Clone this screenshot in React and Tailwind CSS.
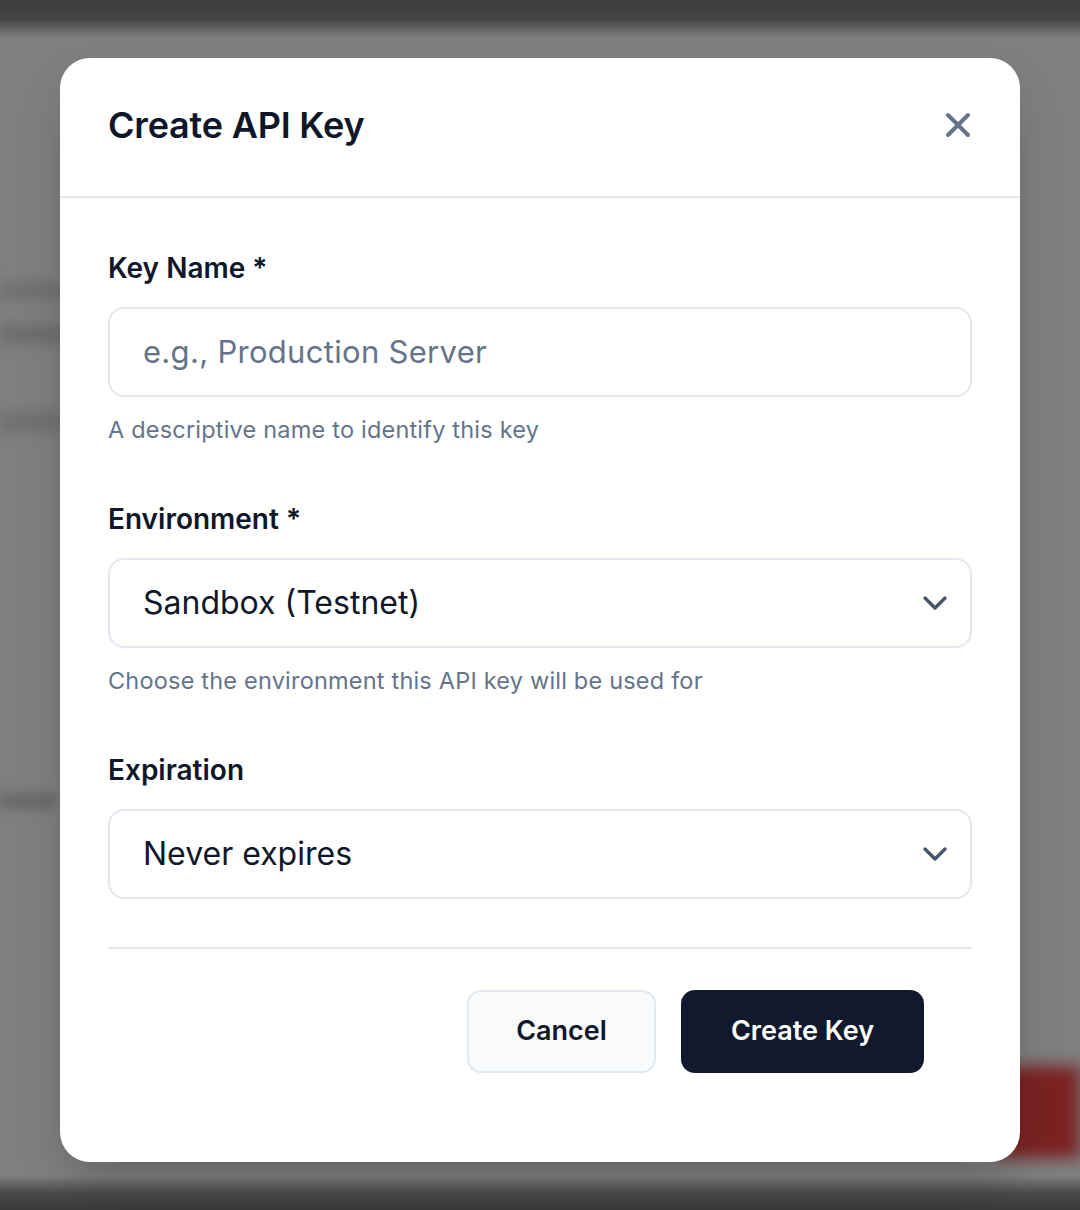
import { X, ChevronDown } from "lucide-react";

const font = { fontFamily: "Inter, 'Noto Sans', sans-serif" };

function Field({ label, helper, children, last }) {
  return (
    <div className={last ? "" : "mb-[59px]"}>
      <div className="text-[28px] leading-[32px] font-semibold text-[#0f172a] mb-[23px]">
        {label}
      </div>
      {children}
      {helper && (
        <div className="mt-[19px] text-[23.5px] leading-[28px] text-[#64748b] tracking-[0.2px]">
          {helper}
        </div>
      )}
    </div>
  );
}

function SelectBox({ value }) {
  return (
    <div className="h-[90px] rounded-[16px] border-2 border-[#e2e8f0] flex items-center justify-between pl-[33px] pr-[15px]">
      <span className="text-[32px] text-[#0f172a]">{value}</span>
      <ChevronDown size={40} strokeWidth={2} className="text-[#475569]" />
    </div>
  );
}

export default function App() {
  return (
    <div
      className="relative h-[1210px] w-[1080px] overflow-hidden bg-[#7f7f7f]"
      style={font}
    >
      {/* blurred page behind the overlay */}
      <div className="absolute inset-x-0 top-0 h-[38px] bg-gradient-to-b from-[#3d3d3d] via-[#454545] to-[#7f7f7f]" />
      <div className="absolute inset-x-0 bottom-0 h-[34px] bg-gradient-to-t from-[#3a3a3a] via-[#4a4a4a] to-[#7f7f7f]" />
      <div className="absolute left-0 top-[284px] h-[14px] w-[70px] bg-[#6c6c6c] blur-[7px]" />
      <div className="absolute left-0 top-[326px] h-[16px] w-[70px] bg-[#6a6a6a] blur-[7px]" />
      <div className="absolute left-0 top-[414px] h-[16px] w-[70px] bg-[#6d6d6d] blur-[7px]" />
      <div className="absolute left-0 top-[794px] h-[14px] w-[56px] bg-[#666666] blur-[6px]" />
      <div className="absolute right-0 top-[1066px] h-[92px] w-[84px] bg-[#7a2222] blur-[8px]" />

      <div className="relative pt-[58px] px-[60px]">
        <div className="bg-white rounded-[30px] w-[960px] h-[1104px] shadow-2xl flex flex-col">
          <div className="h-[140px] flex items-center justify-between pl-[48px] pr-[42px] border-b-2 border-[#e2e8f0]">
            <h2 className="text-[36px] leading-[40px] font-semibold text-[#0f172a] tracking-[-0.2px] -mt-[4px]">
              Create API Key
            </h2>
            <X size={40} strokeWidth={2.4} className="text-[#64748b] -mt-[4px]" />
          </div>

          <div className="px-[48px] pt-[54px]">
            <Field label="Key Name *" helper="A descriptive name to identify this key">
              <div className="h-[90px] rounded-[16px] border-2 border-[#e2e8f0] flex items-center pl-[33px]">
                <span className="text-[31px] text-[#64748b] tracking-[0.3px]">
                  e.g., Production Server
                </span>
              </div>
            </Field>
            <Field
              label="Environment *"
              helper="Choose the environment this API key will be used for"
            >
              <SelectBox value="Sandbox (Testnet)" />
            </Field>
            <Field label="Expiration" last>
              <SelectBox value="Never expires" />
            </Field>

            <div className="mt-[48px] border-t-2 border-[#e2e8f0]" />

            <div className="flex justify-end gap-[25px] pt-[41px] pr-[48px]">
              <button className="h-[83px] w-[189px] rounded-[14px] border-2 border-[#e2e8f0] bg-[#f8fafc] text-[27px] font-semibold text-[#0f172a]">
                Cancel
              </button>
              <button className="h-[83px] w-[243px] rounded-[14px] bg-[#111a2c] text-[27px] font-semibold text-white">
                Create Key
              </button>
            </div>
          </div>
        </div>
      </div>
    </div>
  );
}
